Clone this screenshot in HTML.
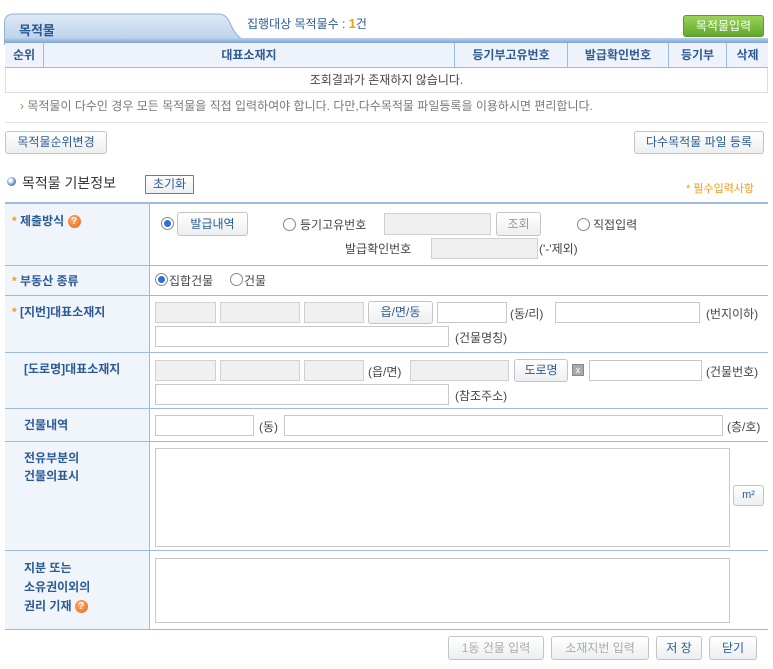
<!DOCTYPE html>
<html><head><meta charset="utf-8">
<style>
*{box-sizing:border-box;margin:0;padding:0}
body{width:773px;height:669px;background:#fff;font-family:"Liberation Sans","Noto Sans CJK KR",sans-serif;font-size:12px;color:#444;position:relative;overflow:hidden}
.a{position:absolute}
.btn{position:absolute;border:1px solid #c4c4c4;border-radius:3px;background:linear-gradient(#fff,#eceeef);color:#2b5a94;font-size:12px;text-align:center;white-space:nowrap}
.in{position:absolute;border:1px solid #c8c8c8;background:#fff}
.dis{background:#f0f0f0;border-color:#d0d0d0}
.lbl{position:absolute;left:5px;width:145px;background:#f0f4fb;border-right:1px solid #9bbbe6}
.lt{position:absolute;color:#2b5a94;font-weight:bold;font-size:12px}
.st{color:#f39a1b}
.hl{position:absolute;left:5px;width:763px;height:1px;background:#9bbbe6}
.hd{position:absolute;top:43px;height:25px;line-height:25px;text-align:center;color:#2b5a94;font-weight:bold;border-right:1px solid #9bbbe6}
.q{display:inline-block;width:13px;height:13px;border-radius:50%;background:radial-gradient(circle at 40% 35%,#ffb070,#e8620c);color:#fff;font-size:10px;line-height:13px;text-align:center;font-weight:bold;vertical-align:middle}
.rd{position:absolute;width:13px;height:13px;border:1px solid #888;border-radius:50%;background:#fff}
.rd.on::after{content:"";position:absolute;left:2px;top:2px;width:7px;height:7px;border-radius:50%;background:#2f6fd6}
.t{position:absolute;white-space:nowrap;font-size:12px;color:#444}
</style></head><body>
<!-- tab -->
<svg class="a" style="left:4px;top:13px" width="240" height="32"><defs><linearGradient id="g" x1="0" y1="0" x2="0" y2="1"><stop offset="0" stop-color="#dfe9f5"/><stop offset="1" stop-color="#b5cde9"/></linearGradient></defs><path d="M0.5 32 V10 Q0.5 1 10 1 H215 Q222 1 226 10 Q232 24 240 27 V32 Z" fill="url(#g)" stroke="#8fb0d8"/></svg>
<div class="a" style="left:19px;top:20px;color:#2b5a94;font-weight:bold;font-size:13px">목적물</div>
<div class="t" style="left:247px;top:15px;color:#2b5a94">집행대상 목적물수 : <b style="color:#f39a1b;font-size:13px">1</b>건</div>
<div class="btn" style="left:683px;top:15px;width:81px;height:22px;line-height:20px;background:linear-gradient(#9bd35a,#5fa82a);border-color:#5b9a2e;color:#fff">목적물입력</div>
<div class="a" style="left:5px;top:38px;width:763px;height:5px;background:linear-gradient(#b9cfeb,#7fa5d6)"></div>
<div class="a" style="left:5px;top:43px;width:763px;height:25px;background:#eef3fb;border-bottom:1px solid #9bbbe6"></div>
<div class="hd" style="left:5px;width:39px">순위</div>
<div class="hd" style="left:44px;width:411px">대표소재지</div>
<div class="hd" style="left:455px;width:113px">등기부고유번호</div>
<div class="hd" style="left:568px;width:101px">발급확인번호</div>
<div class="hd" style="left:669px;width:58px">등기부</div>
<div class="hd" style="left:727px;width:41px;border:none">삭제</div>
<div class="a" style="left:5px;top:68px;width:763px;height:25px;border:1px solid #ddd;border-top:none;text-align:center;line-height:24px">조회결과가 존재하지 않습니다.</div>
<div class="t" style="left:20px;top:97px;color:#777"><span style="color:#7aa83a">›</span> 목적물이 다수인 경우 모든 목적물을 직접 입력하여야 합니다. 다만,다수목적물 파일등록을 이용하시면 편리합니다.</div>
<div class="a" style="left:5px;top:122px;width:763px;height:1px;background:#e4e4e4"></div>
<div class="btn" style="left:5px;top:131px;width:102px;height:23px;line-height:21px">목적물순위변경</div>
<div class="btn" style="left:634px;top:131px;width:130px;height:23px;line-height:21px">다수목적물 파일 등록</div>
<!-- section -->
<div class="a" style="left:7px;top:177px;width:9px;height:9px;border-radius:50%;background:radial-gradient(circle at 40% 40%,#fff 15%,#5a86c4 60%)"></div>
<div class="t" style="left:22px;top:173px;font-size:14px;color:#333">목적물 기본정보</div>
<div class="btn" style="left:145px;top:175px;width:49px;height:19px;line-height:17px;border-color:#5a7eaa;border-radius:1px">초기화</div>
<div class="t" style="left:686px;top:180px;color:#f39a1b;font-size:11px">* 필수입력사항</div>
<!-- form -->
<div class="lbl" style="top:203px;height:426px"></div>
<div class="hl" style="top:202px;height:2px"></div>
<div class="hl" style="top:265px"></div>
<div class="hl" style="top:295px"></div>
<div class="hl" style="top:352px"></div>
<div class="hl" style="top:408px"></div>
<div class="hl" style="top:441px"></div>
<div class="hl" style="top:550px"></div>
<div class="hl" style="top:629px"></div>
<div class="lt" style="left:12px;top:212px"><span class="st">*</span> 제출방식 <span class="q">?</span></div>
<div class="lt" style="left:12px;top:272px"><span class="st">*</span> 부동산 종류</div>
<div class="lt" style="left:12px;top:303px"><span class="st">*</span> [지번]대표소재지</div>
<div class="lt" style="left:24px;top:360px">[도로명]대표소재지</div>
<div class="lt" style="left:24px;top:416px">건물내역</div>
<div class="lt" style="left:24px;top:449px;line-height:18px">전유부분의<br>건물의표시</div>
<div class="lt" style="left:24px;top:559px;line-height:19px">지분 또는<br>소유권이외의<br>권리 기재 <span class="q">?</span></div>
<!-- row1 -->
<div class="rd on" style="left:161px;top:217px"></div>
<div class="btn" style="left:177px;top:212px;width:71px;height:24px;line-height:22px;color:#2b5a94">발급내역</div>
<div class="rd" style="left:283px;top:218px"></div>
<div class="t" style="left:300px;top:216px">등기고유번호</div>
<div class="in dis" style="left:384px;top:213px;width:107px;height:22px"></div>
<div class="btn" style="left:496px;top:212px;width:45px;height:24px;line-height:22px;color:#999">조회</div>
<div class="rd" style="left:577px;top:218px"></div>
<div class="t" style="left:593px;top:216px">직접입력</div>
<div class="t" style="left:345px;top:240px">발급확인번호</div>
<div class="in dis" style="left:431px;top:238px;width:107px;height:21px"></div>
<div class="t" style="left:539px;top:240px">('-'제외)</div>
<!-- row2 -->
<div class="rd on" style="left:155px;top:273px"></div>
<div class="t" style="left:169px;top:272px">집합건물</div>
<div class="rd" style="left:230px;top:273px"></div>
<div class="t" style="left:244px;top:272px">건물</div>
<!-- row3 -->
<div class="in dis" style="left:155px;top:302px;width:61px;height:21px"></div>
<div class="in dis" style="left:220px;top:302px;width:80px;height:21px"></div>
<div class="in dis" style="left:304px;top:302px;width:60px;height:21px"></div>
<div class="btn" style="left:368px;top:301px;width:65px;height:23px;line-height:21px">읍/면/동</div>
<div class="in" style="left:437px;top:302px;width:70px;height:21px"></div>
<div class="t" style="left:510px;top:305px">(동/리)</div>
<div class="in" style="left:555px;top:302px;width:145px;height:21px"></div>
<div class="t" style="left:706px;top:305px">(번지이하)</div>
<div class="in" style="left:155px;top:326px;width:294px;height:21px"></div>
<div class="t" style="left:455px;top:329px">(건물명칭)</div>
<!-- row4 -->
<div class="in dis" style="left:155px;top:360px;width:61px;height:21px"></div>
<div class="in dis" style="left:220px;top:360px;width:80px;height:21px"></div>
<div class="in dis" style="left:304px;top:360px;width:60px;height:21px"></div>
<div class="t" style="left:368px;top:363px">(읍/면)</div>
<div class="in dis" style="left:410px;top:360px;width:99px;height:21px"></div>
<div class="btn" style="left:514px;top:359px;width:54px;height:23px;line-height:21px">도로명</div>
<div class="a" style="left:572px;top:364px;width:12px;height:12px;background:#aaa;border:1px solid #888;color:#fff;font-size:9px;line-height:10px;text-align:center">x</div>
<div class="in" style="left:589px;top:360px;width:113px;height:21px"></div>
<div class="t" style="left:706px;top:363px">(건물번호)</div>
<div class="in" style="left:155px;top:384px;width:294px;height:21px"></div>
<div class="t" style="left:455px;top:387px">(참조주소)</div>
<!-- row5 -->
<div class="in" style="left:155px;top:415px;width:99px;height:21px"></div>
<div class="t" style="left:259px;top:418px">(동)</div>
<div class="in" style="left:284px;top:415px;width:439px;height:21px"></div>
<div class="t" style="left:727px;top:418px">(층/호)</div>
<!-- row6 -->
<div class="in" style="left:155px;top:448px;width:575px;height:99px"></div>
<div class="btn" style="left:733px;top:485px;width:31px;height:21px;line-height:19px;font-size:11px">m²</div>
<!-- row7 -->
<div class="in" style="left:155px;top:558px;width:575px;height:65px"></div>
<!-- bottom -->
<div class="btn" style="left:448px;top:636px;width:96px;height:24px;line-height:22px;color:#aaa">1동 건물 입력</div>
<div class="btn" style="left:551px;top:636px;width:98px;height:24px;line-height:22px;color:#aaa">소재지번 입력</div>
<div class="btn" style="left:656px;top:636px;width:46px;height:24px;line-height:22px;color:#2b5a94">저 장</div>
<div class="btn" style="left:709px;top:636px;width:48px;height:24px;line-height:22px;color:#2b5a94">닫기</div>
</body></html>
